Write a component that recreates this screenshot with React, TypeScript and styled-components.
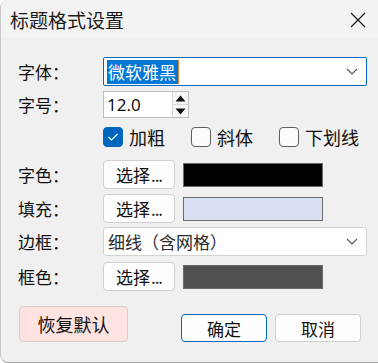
import React from "react";
import styled, { createGlobalStyle } from "styled-components";

const GlobalStyle = createGlobalStyle`
  html, body {
    margin: 0;
    padding: 0;
    background: #ffffff;
  }
  body {
    font-family: "Noto Sans CJK SC", "Noto Sans", sans-serif;
    color: #111;
  }
`;

const Dialog = styled.div`
  width: 378px;
  height: 363px;
  box-sizing: border-box;
  background: #f0f0f0;
  border-radius: 8px 0 0 8px;
  border-bottom: 1px solid #a8a8a8;
  border-left: 1px solid #c8c8c8;
  display: flex;
  flex-direction: column;
  overflow: hidden;
`;

const TitleBar = styled.div`
  height: 38px;
  flex-shrink: 0;
  display: flex;
  align-items: center;
  justify-content: space-between;
  padding: 0 12px 0 9px;
  background: #f3f3f3;
  font-size: 19px;
  color: #1b1b1b;
`;

const CloseButton = styled.div`
  width: 16px;
  height: 16px;
  display: flex;
  align-items: center;
  justify-content: center;
  margin-top: 2px;
`;

const Body = styled.div`
  flex: 1;
  display: flex;
  flex-direction: column;
  padding: 19px 11px 0 17px;
`;

const Row = styled.div<{ $mt?: number; $h: number }>`
  display: flex;
  align-items: center;
  height: ${(p) => p.$h}px;
  margin-top: ${(p) => p.$mt ?? 0}px;
`;

const Label = styled.div`
  width: 85px;
  flex-shrink: 0;
  font-size: 17px;
  line-height: 20px;
  color: #111;
`;

const Combo = styled.div<{ $focused?: boolean }>`
  flex: 1;
  height: 100%;
  box-sizing: border-box;
  background: #fff;
  border: 1px solid ${(p) => (p.$focused ? "#0067c0" : "#d3d3d3")};
  border-radius: ${(p) => (p.$focused ? "2px" : "3px")};
  display: flex;
  align-items: center;
  justify-content: space-between;
  padding: 0 8px 0 3px;
  font-size: 17px;
  color: #262626;
`;

const Selected = styled.span`
  background: #0078d7;
  color: #fff;
  line-height: 24px;
  padding: 0 2px 0 1px;
  border-right: 1px solid #e07a2b;
`;

const ComboText = styled.span`
  padding-left: 1px;
  color: #2a2a2a;
`;

const Spin = styled.div`
  width: 86px;
  height: 100%;
  box-sizing: border-box;
  background: #fff;
  border: 1px solid #bdbdbd;
  display: flex;
  align-items: stretch;
`;

const SpinInput = styled.div`
  flex: 1;
  display: flex;
  align-items: center;
  padding-left: 3px;
  font-family: "Open Sans", "Noto Sans", sans-serif;
  font-size: 17px;
  color: #000;
`;

const SpinButtons = styled.div`
  width: 15px;
  display: flex;
  flex-direction: column;
  border-left: 1px solid #d8d8d8;
`;

const SpinHalf = styled.div`
  flex: 1;
  display: flex;
  align-items: center;
  justify-content: center;
  background: #f7f7f7;
  & + & {
    border-top: 1px solid #d8d8d8;
  }
`;

const CheckItem = styled.div`
  width: 88px;
  display: flex;
  align-items: center;
  gap: 6px;
  font-size: 18px;
  color: #111;
`;

const Box = styled.div<{ $checked?: boolean }>`
  width: 20px;
  height: 20px;
  box-sizing: border-box;
  border-radius: 4px;
  background: ${(p) => (p.$checked ? "#0067c0" : "#fbfbfb")};
  border: 1px solid ${(p) => (p.$checked ? "#0067c0" : "#5f5f5f")};
  display: flex;
  align-items: center;
  justify-content: center;
`;

const Button = styled.div<{ $w: number; $h: number; $primary?: boolean; $bg?: string; $fs?: number }>`
  width: ${(p) => p.$w}px;
  height: ${(p) => p.$h}px;
  box-sizing: border-box;
  background: ${(p) => p.$bg ?? "#fdfdfd"};
  border: 1px solid ${(p) => (p.$primary ? "#0067c0" : "#d0d0d0")};
  border-radius: 4px;
  display: flex;
  align-items: center;
  justify-content: center;
  font-size: ${(p) => p.$fs ?? 17}px;
  color: #111;
  flex-shrink: 0;
`;

const Dots = styled.span`
  letter-spacing: -1px;
  margin-left: 1px;
`;

const Swatch = styled.div<{ $color: string }>`
  width: 140px;
  height: 24px;
  box-sizing: border-box;
  margin-left: 8px;
  background: ${(p) => p.$color};
  border: 1px solid #6a6a6a;
`;

const Footer = styled.div`
  display: flex;
  align-items: flex-end;
  justify-content: space-between;
  margin-top: 15px;
  padding: 0 6px 0 1px;
`;

const ButtonGroup = styled.div`
  display: flex;
  gap: 8px;
`;

const Chevron = () => (
  <svg width="12" height="7" viewBox="0 0 12 7">
    <path d="M1 1 L6 6 L11 1" fill="none" stroke="#555" strokeWidth="1.1" />
  </svg>
);

const ChooseButton = () => (
  <Button $w={72} $h={29}>
    选择<Dots>...</Dots>
  </Button>
);

const colorRows = [
  { label: "字色：", color: "#000000", mt: 13 },
  { label: "填充：", color: "#dae0f3", mt: 5 },
];

export default function App() {
  return (
    <>
      <GlobalStyle />
      <Dialog>
        <TitleBar>
          <span>标题格式设置</span>
          <CloseButton>
            <svg width="16" height="16" viewBox="0 0 16 16">
              <path d="M1 1 L15 15 M15 1 L1 15" stroke="#222" strokeWidth="1.3" />
            </svg>
          </CloseButton>
        </TitleBar>
        <Body>
          <Row $h={29}>
            <Label>字体：</Label>
            <Combo $focused>
              <Selected>微软雅黑</Selected>
              <Chevron />
            </Combo>
          </Row>
          <Row $h={27} $mt={5}>
            <Label>字号：</Label>
            <Spin>
              <SpinInput>12.0</SpinInput>
              <SpinButtons>
                <SpinHalf>
                  <svg width="11" height="7" viewBox="0 0 11 7">
                    <path d="M0.5 6.5 L5.5 0.5 L10.5 6.5 Z" fill="#111" />
                  </svg>
                </SpinHalf>
                <SpinHalf>
                  <svg width="11" height="7" viewBox="0 0 11 7">
                    <path d="M0.5 0.5 L5.5 6.5 L10.5 0.5 Z" fill="#111" />
                  </svg>
                </SpinHalf>
              </SpinButtons>
            </Spin>
          </Row>
          <Row $h={20} $mt={9}>
            <Label />
            <CheckItem>
              <Box $checked>
                <svg width="12" height="10" viewBox="0 0 12 10">
                  <path d="M1.5 5 L4.5 8 L10.5 2" fill="none" stroke="#fff" strokeWidth="1.2" />
                </svg>
              </Box>
              加粗
            </CheckItem>
            <CheckItem>
              <Box />
              斜体
            </CheckItem>
            <CheckItem>
              <Box />
              下划线
            </CheckItem>
          </Row>
          {colorRows.map((r) => (
            <Row key={r.label} $h={29} $mt={r.mt}>
              <Label>{r.label}</Label>
              <ChooseButton />
              <Swatch $color={r.color} />
            </Row>
          ))}
          <Row $h={29} $mt={4}>
            <Label>边框：</Label>
            <Combo>
              <ComboText>细线（含网格）</ComboText>
              <Chevron />
            </Combo>
          </Row>
          <Row $h={29} $mt={6}>
            <Label>框色：</Label>
            <ChooseButton />
            <Swatch $color="#505050" />
          </Row>
          <Footer>
            <Button $w={109} $h={36} $bg="#ffe3e0" $fs={18}>
              恢复默认
            </Button>
            <ButtonGroup>
              <Button $w={86} $h={28} $primary>
                确定
              </Button>
              <Button $w={86} $h={28}>
                取消
              </Button>
            </ButtonGroup>
          </Footer>
        </Body>
      </Dialog>
    </>
  );
}
